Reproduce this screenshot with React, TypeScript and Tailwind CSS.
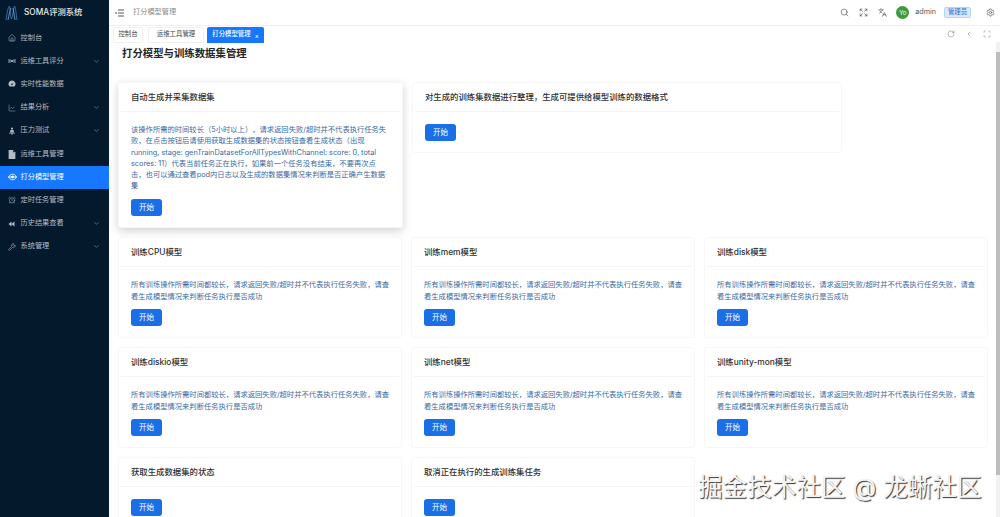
import {
  AlarmClock,
  ChartLine,
  ChevronDown,
  ChevronLeft,
  Expand,
  House,
  Languages,
  RotateCw,
  Scan,
  Search,
  Settings,
  Wrench,
} from 'lucide-react';

const font = { fontFamily: 'Inter, "Noto Sans CJK SC", sans-serif' };

function ToolsIcon() {
  return (
    <svg width="8" height="8" viewBox="0 0 16 16" fill="none" stroke="currentColor" strokeWidth="1.6">
      <path d="M2 4v8M14 4v8M2 8h12" />
      <path d="M5 5l3 3-3 3M11 5L8 8l3 3" />
    </svg>
  );
}

function GaugeIcon() {
  return (
    <svg width="8" height="8" viewBox="0 0 16 16" fill="currentColor">
      <path d="M8 1a7 7 0 0 0-5.6 11.2c.3.4.7.6 1.2.6h8.8c.5 0 .9-.2 1.2-.6A7 7 0 0 0 8 1zm.9 8.6a1.3 1.3 0 1 1-1.6-1.8l4-2.4-2.4 4.2z" />
    </svg>
  );
}

function BellIcon() {
  return (
    <svg width="8" height="8" viewBox="0 0 16 16" fill="currentColor">
      <circle cx="8" cy="3.2" r="2.2" />
      <path d="M5 6h6l1 5H4z" />
      <path d="M2 11.5h12v1.5H2zM7 13h2v2.5H7z" />
    </svg>
  );
}

function FileFilledIcon() {
  return (
    <svg width="8" height="9" viewBox="0 0 14 16" fill="currentColor">
      <path d="M1 0h8l4 4v12H1z" />
      <path d="M9 0v4h4z" fill="#04192b" />
    </svg>
  );
}

function CloudEyeIcon() {
  return (
    <svg width="9" height="8" viewBox="0 0 18 16" fill="none" stroke="currentColor" strokeWidth="1.8">
      <path d="M1 8c2-3.500 5-5.500 8-5.500S15 4.500 17 8c-2 3.500-5 5.500-8 5.500S3 11.500 1 8z" />
      <path d="M1 8h16" />
      <circle cx="9" cy="8" r="2" fill="currentColor" />
    </svg>
  );
}

function RewindIcon() {
  return (
    <svg width="7" height="6" viewBox="0 0 14 12" fill="currentColor">
      <path d="M7 1v10L1 6zM13 1v10L7 6z" />
    </svg>
  );
}

const menus = [
  { label: '控制台', icon: <House size={8} strokeWidth={1.6} /> },
  { label: '运维工具评分', icon: <ToolsIcon />, arrow: true },
  { label: '实时性能数据', icon: <GaugeIcon /> },
  { label: '结果分析', icon: <ChartLine size={8} strokeWidth={1.4} />, arrow: true },
  { label: '压力测试', icon: <BellIcon />, arrow: true },
  { label: '运维工具管理', icon: <FileFilledIcon /> },
  { label: '打分模型管理', icon: <CloudEyeIcon />, active: true },
  { label: '定时任务管理', icon: <AlarmClock size={8} strokeWidth={1.6} /> },
  { label: '历史结果查看', icon: <RewindIcon />, arrow: true },
  { label: '系统管理', icon: <Wrench size={8} strokeWidth={1.6} />, arrow: true },
];

const trainText =
  '所有训练操作所需时间都较长，请求返回失败/超时并不代表执行任务失败，请查\n看生成模型情况来判断任务执行是否成功';

const autoText =
  '该操作所需的时间较长（5小时以上），请求返回失败/超时并不代表执行任务失\n败，在点击按钮后请使用获取生成数据集的状态按钮查看生成状态（出现\nrunning, stage: genTrainDatasetForAllTypesWithChannel: score: 0, total\nscores: 11）代表当前任务正在执行，如果前一个任务没有结束，不要再次点\n击，也可以通过查看pod内日志以及生成的数据集情况来判断是否正确产生数据\n集';

const trainCards = ['训练CPU模型', '训练mem模型', '训练disk模型', '训练diskio模型', '训练net模型', '训练unity-mon模型'];

function StartButton() {
  return (
    <button className="block w-[31px] h-[17px] bg-[#1b6fe6] text-white text-[7.5px] rounded-[3px] shrink-0">
      开始
    </button>
  );
}

function Card({ title, text, className }: { title: string; text?: string; className?: string }) {
  return (
    <div className={`bg-white border border-[#f7f7f7] rounded-[3px] ${className || ''}`}>
      <div className="h-[29px] mx-[2px] pl-[10px] flex items-center border-b border-[#f4f4f4] text-[8.4px] font-medium text-[#303030]">
        {title}
      </div>
      <div className="px-[12px] pt-[12px] pb-[11px]">
        {text ? (
          <p className="text-[7.3px] leading-[11.3px] text-[#3a6aa3] mb-[7.5px] whitespace-pre [text-spacing-trim:space-all]">
            {text}
          </p>
        ) : null}
        <StartButton />
      </div>
    </div>
  );
}

export default function App() {
  return (
    <div className="relative flex w-[1000px] h-[517px] overflow-hidden bg-white" style={font}>
      <aside className="w-[109px] shrink-0 bg-[#04192b] text-[#b4bcc5]">
        <div className="h-[25px] pl-[5px] flex items-center gap-[6px]">
          <svg width="13" height="16" viewBox="0 0 13 16" fill="none" stroke="#3f7fc4" strokeWidth="0.8">
            <path d="M1 15 C2 8 3 2 4.500 1 C5.500 3 5 11 6.500 14 C8 11 8 4 9.500 1 C11 3 11 10 12 15" />
            <path d="M3 15 C4 10 5 5 6 3 M8 3 C9 7 9 11 10 15" stroke="#7fb0e0" />
          </svg>
          <span className="text-[8.3px] font-medium text-[#e6e9ec]">SOMA评测系统</span>
        </div>
        <nav className="pt-[1.500px]">
          {menus.map((m) => (
            <div
              key={m.label}
              className={`h-[23.2px] pl-[8px] pr-[9px] flex items-center text-[7.2px] ${
                m.active ? 'bg-[#1677ff] text-white' : ''
              }`}
            >
              <span className="w-[12.500px] flex items-center">{m.icon}</span>
              <span className="flex-1">{m.label}</span>
              {m.arrow ? <ChevronDown size={7} strokeWidth={1.6} /> : null}
            </div>
          ))}
        </nav>
      </aside>

      <div className="flex-1 min-w-0 flex flex-col">
        <header className="h-[26px] shrink-0 border-b border-[#f0f0f0] flex items-center pl-[6px] pr-[5px] text-[#444]">
          <svg width="9" height="8" viewBox="0 0 18 16" fill="none" stroke="#444" strokeWidth="1.800">
            <path d="M6 2h12M6 8h12M6 14h12" />
            <path d="M0 8l3-2.500v5z" fill="#444" stroke="none" />
          </svg>
          <span className="ml-[9px] text-[7.2px] text-[#8c8c8c]">打分模型管理</span>
          <div className="ml-auto flex items-center">
            <Search size={9} strokeWidth={1.6} />
            <Expand size={9} strokeWidth={1.6} className="ml-[10px]" />
            <Languages size={9} strokeWidth={1.6} className="ml-[10px]" />
            <span className="ml-[9px] w-[13px] h-[13px] rounded-full bg-[#3f9a3c] text-white text-[6px] flex items-center justify-center">
              Yo
            </span>
            <span className="ml-[6px] text-[7.2px] text-[#555]">admin</span>
            <span className="ml-[8px] w-[27px] h-[11px] rounded-[2px] bg-[#dbe8fb] border border-[#bcd4f6] text-[#2a6fd0] text-[6.4px] flex items-center justify-center">
              管理员
            </span>
            <Settings size={9} strokeWidth={1.6} className="ml-[15px]" />
          </div>
        </header>

        <div className="h-[17px] shrink-0 flex items-end pl-[4px] pr-[9px] text-[6.4px]">
          <span className="h-[16px] w-[30px] flex items-center justify-center border border-[#f0f0f0] rounded-t-[2px] text-[#444]">
            控制台
          </span>
          <span className="ml-[5px] h-[16px] w-[56px] flex items-center justify-center border border-[#f0f0f0] rounded-t-[2px] text-[#444]">
            运维工具管理
          </span>
          <span className="ml-[3px] h-[16px] w-[57px] flex items-center justify-center gap-[4px] bg-[#1677ff] text-white rounded-t-[2px] font-medium">
            打分模型管理 <span className="text-[6px]">×</span>
          </span>
          <div className="ml-auto flex items-center gap-[10px] pb-[5px] text-[#777]">
            <RotateCw size={8} strokeWidth={1.5} />
            <ChevronLeft size={8} strokeWidth={1.5} />
            <Scan size={8} strokeWidth={1.5} />
          </div>
        </div>

        <main className="relative flex-1 min-h-0 overflow-hidden pl-[9px] pr-[12px]">
          <h1 className="pl-[4px] pt-[3px] text-[10.4px] leading-[16px] font-semibold text-[#262626]">
            打分模型与训练数据集管理
          </h1>
          <div className="mt-[20px] flex items-start gap-[9px]">
            <Card
              title="自动生成并采集数据集"
              text={autoText}
              className="w-[285px] shadow-[0_3px_10px_rgba(0,0,0,0.18)]"
            />
            <Card title="对生成的训练集数据进行整理，生成可提供给模型训练的数据格式" className="w-[430px]" />
          </div>
          <div className="mt-[9px] grid grid-cols-3 gap-x-[9px] gap-y-[9px]">
            {trainCards.map((t) => (
              <Card key={t} title={t} text={trainText} />
            ))}
            <Card title="获取生成数据集的状态" />
            <Card title="取消正在执行的生成训练集任务" />
          </div>
        </main>
      </div>

      <div className="absolute right-0 top-[42px] bottom-0 w-[4px] bg-[#f1f1f1]">
        <div className="mt-[10px] h-[423px] bg-[#bdbdbd]" />
      </div>
      <div className="absolute left-[698px] top-[473px] text-[24.600px] leading-[28px] text-[#f4f4f4] whitespace-nowrap [text-shadow:1px_1px_1px_#333]">
        掘金技术社区 @ 龙蜥社区
      </div>
    </div>
  );
}
